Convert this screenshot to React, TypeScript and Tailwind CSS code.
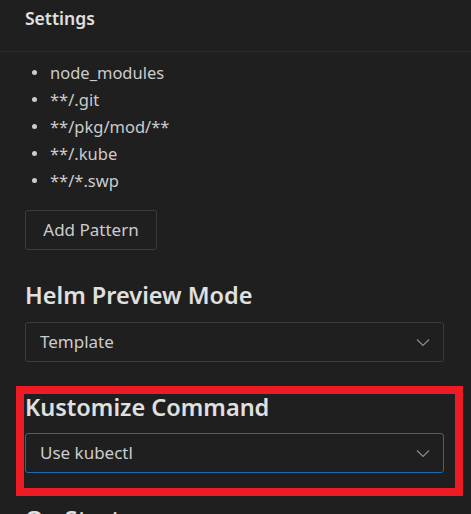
import React from "react";

function Chevron() {
  return (
    <svg width="14" height="9" viewBox="0 0 14 9" fill="none" className="shrink-0">
      <path d="M1 1.5 L7 7.5 L13 1.5" stroke="#8b8b8b" strokeWidth="1.2" />
    </svg>
  );
}

function Select({ value, focused }: { value: string; focused?: boolean }) {
  return (
    <div
      className={
        "h-[40px] w-[419px] rounded-[3px] border flex items-center justify-between pl-[14px] pr-[13px] bg-[#1f1f1f] " +
        (focused ? "border-[#1c6ab3]" : "border-[#3c3c3c]")
      }
    >
      <span className="text-[17px] text-[#cccccc]">{value}</span>
      <Chevron />
    </div>
  );
}

export default function App() {
  const items = ["node_modules", "**/.git", "**/pkg/mod/**", "**/.kube", "**/*.swp"];
  return (
    <div
      className="relative w-[471px] h-[514px] overflow-hidden bg-[#1f1f1f] text-[#cccccc]"
      style={{ fontFamily: '"Noto Sans", "Open Sans", sans-serif' }}
    >
      <div className="h-[52px] border-b border-[#2b2b2b] pl-[25px] pt-[4px]">
        <span className="text-[17.5px] font-semibold text-[#e0e0e0] leading-[28px]">Settings</span>
      </div>
      <div className="pl-[25px]">
        <ul className="pt-[7px]">
          {items.map((t) => (
            <li key={t} className="h-[27px] flex items-center">
              <span className="ml-[7px] w-[5px] h-[5px] rounded-full bg-[#cccccc]" />
              <span className="ml-[13px] text-[16.5px] leading-[27px]">{t}</span>
            </li>
          ))}
        </ul>
        <button className="mt-[16px] h-[40px] w-[132px] rounded-[3px] border border-[#3c3c3c] text-[17px] text-[#cccccc] flex items-center justify-center">
          Add Pattern
        </button>
        <h2 className="mt-[29px] text-[23.5px] font-semibold text-[#e0e0e0] leading-[32px]">Helm Preview Mode</h2>
        <div className="mt-[11px]">
          <Select value="Template" />
        </div>
        <h2 className="mt-[29px] text-[23.5px] font-semibold text-[#e0e0e0] leading-[32px]">Kustomize Command</h2>
        <div className="mt-[10px]">
          <Select value="Use kubectl" focused />
        </div>
        <h2 className="mt-[30px] text-[23.5px] font-semibold text-[#e0e0e0] leading-[32px]">On Startup</h2>
      </div>
      <div className="absolute left-[16px] top-[386px] w-[447px] h-[110px] border-[8px] border-[#ed1c24]" />
    </div>
  );
}
